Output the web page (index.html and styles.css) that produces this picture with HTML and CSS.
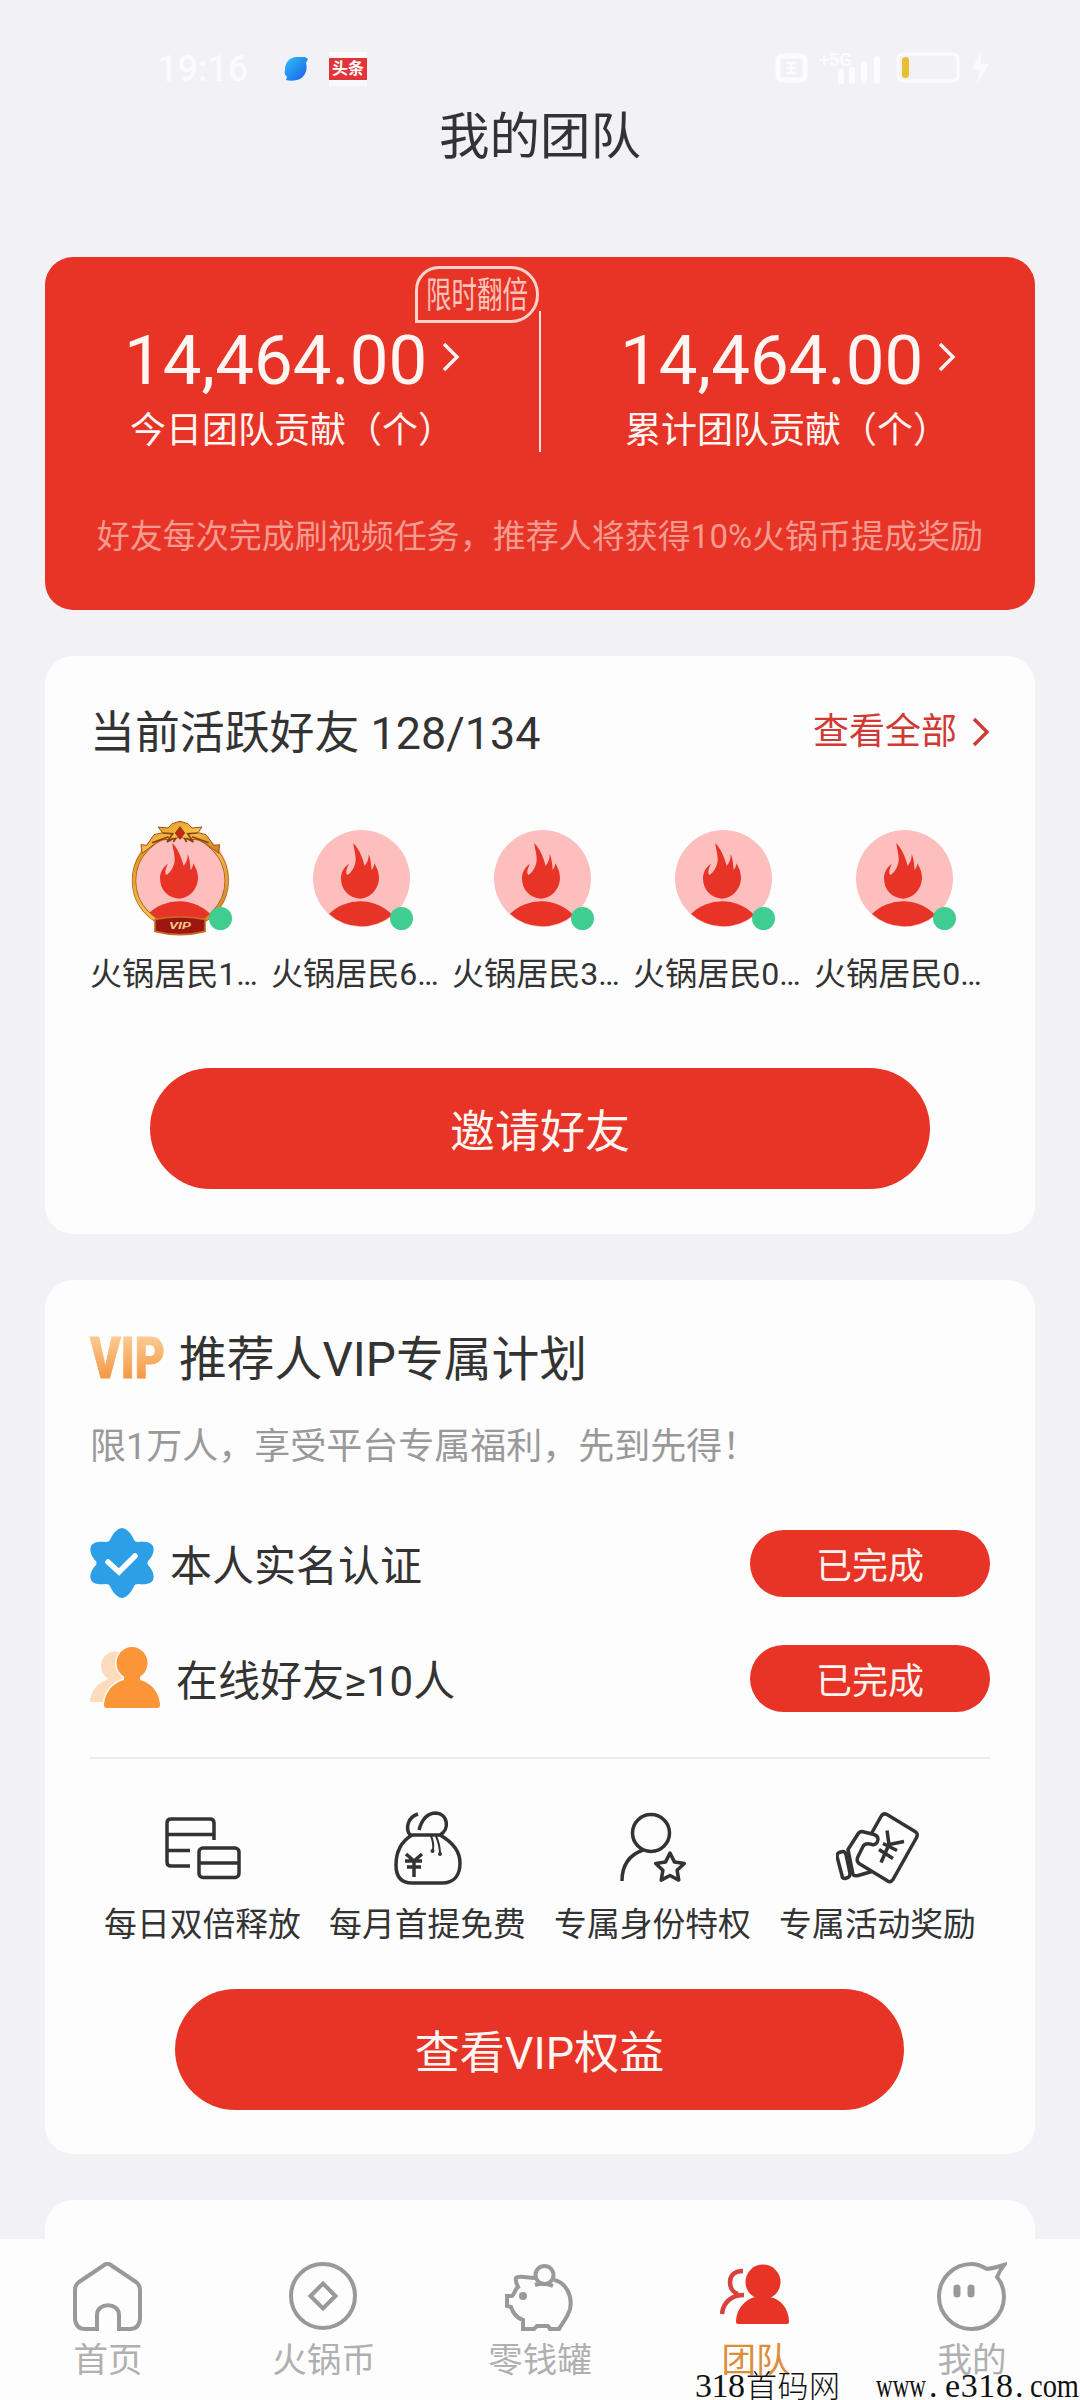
FILE: index.html
```html
<!DOCTYPE html>
<html lang="zh-CN">
<head>
<meta charset="utf-8">
<title>我的团队</title>
<link rel="stylesheet" href="styles.css">
</head>
<body>
<svg class="defs" width="0" height="0" aria-hidden="true">
  <defs>
    <symbol id="avatar" viewBox="0 0 291 291">
      <circle cx="145.5" cy="145.5" r="145.5" fill="#fdbfbe"/>
      <path fill="#e73427" d="M121 40C135 52 148 80 155 108C163 98 168 86 167 72C173 84 174 100 176 120C181 114 183 108 184 100C192 115 198 125 198 145C196 185 165 206 141 206C108 204 84 180 84 145C84 128 92 112 108 101C101 115 97 128 103 135C115 130 130 105 128 85C127 65 122 55 121 40Z"/>
      <path fill="#e73427" d="M48 252A130 125 0 0 1 238 255A145.500 145.500 0 0 1 48 252Z"/>
    </symbol>
    <symbol id="chevron" viewBox="0 0 18 30">
      <path d="M2 2L15 15L2 28" fill="none" stroke="currentColor" stroke-width="3.400"/>
    </symbol>
    <linearGradient id="gold" x1="0" y1="0" x2="0" y2="1">
      <stop offset="0" stop-color="#fbd9a8"/><stop offset="1" stop-color="#f5862b"/>
    </linearGradient>
    <linearGradient id="frame" x1="0" y1="0" x2="1" y2="1">
      <stop offset="0" stop-color="#d98a1c"/><stop offset=".5" stop-color="#f9c04a"/><stop offset="1" stop-color="#c97a1c"/>
    </linearGradient>
    <linearGradient id="sky" x1="0" y1="0" x2="1" y2="1">
      <stop offset="0" stop-color="#2fc0f5"/><stop offset="1" stop-color="#1a5be8"/>
    </linearGradient>
  </defs>
</svg>

<div class="screen">
  <header class="statusbar">
    <div class="status-left">
      <span class="clock">19:16</span>
      <svg class="leaf" width="24" height="24" viewBox="0 0 24 24"><path fill="url(#sky)" d="M1 13C1 5 6 0 13 0H21L24 2L22 6C24 13 21 19 16 22C11 24 7 24 2 23L3 20C1 18 0 16 1 13Z"/></svg>
      <span class="toutiao"><b>头条</b></span>
    </div>
    <div class="status-right">
      <svg width="218" height="40" viewBox="0 0 218 40" fill="none" stroke="#fcfcfe">
        <rect x="3" y="8" width="27" height="24" rx="4" stroke-width="5"/>
        <path d="M12 15H21M12 20H21M12 25H21M16 15V25" stroke-width="2"/>
        <text x="44" y="18" class="net">+5G</text>
        <path d="M66 24V33M77 22V33M89 17V33M102 11V33" stroke-width="6" stroke-linecap="round"/>
        <rect x="123" y="6" width="60" height="27" rx="5" stroke-width="3"/>
        <rect x="127" y="9" width="7" height="21" rx="3.500" fill="#e9bd34" stroke="none"/>
        <path d="M206 3L197 21H205L202 36L214 16H206Z" fill="#fafafd" stroke="none"/>
      </svg>
    </div>
  </header>
  <h1 class="title">我的团队</h1>

  <main class="content">
    <section class="card summary">
      <div class="stats">
        <div class="stat">
          <div class="stat-value">14,464.00<svg width="18" height="30"><use href="#chevron"/></svg></div>
          <div class="stat-label">今日团队贡献（个）</div>
          <span class="flag"><span>限时翻倍</span></span>
        </div>
        <div class="stat total">
          <div class="stat-value">14,464.00<svg width="18" height="30"><use href="#chevron"/></svg></div>
          <div class="stat-label">累计团队贡献（个）</div>
        </div>
      </div>
      <p class="hint">好友每次完成刷视频任务，推荐人将获得10%火锅币提成奖励</p>
    </section>

    <section class="card friends">
      <div class="card-head">
        <h2>当前活跃好友 128/134</h2>
        <a class="more"><span>查看全部</span><svg width="18" height="30"><use href="#chevron"/></svg></a>
      </div>
      <ul class="friend-list">
        <li><div class="avatar"><svg width="97" height="97"><use href="#avatar"/></svg>
          <svg class="vip-frame" width="105" height="117" viewBox="-12 -30 315 351">
            <ellipse cx="145" cy="152" rx="139" ry="138" fill="none" stroke="#a45f13" stroke-width="13"/>
            <ellipse cx="145" cy="152" rx="139" ry="138" fill="none" stroke="url(#frame)" stroke-width="9"/>
            <path d="M30 70L27 44L44 46L66 14L92 8L78 -9L108 -6L120 -19L144 -26L168 -19L180 -6L210 -9L198 8L222 14L245 46L263 44L260 70L240 55L205 30L172 28L144 22L116 28L84 30L50 55Z" fill="url(#frame)" stroke="#9c5513" stroke-width="3"/>
            <path d="M92 9L122 11L105 36L126 25M197 9L167 11L184 36L163 25M60 38L110 20M230 38L180 20M132 24L124 36M157 24L164 36" fill="none" stroke="#8a3f10" stroke-width="5"/>
            <path d="M144 -10L158 9L144 28L130 9Z" fill="#c92416" stroke="#8a3f10" stroke-width="3"/>
            <path d="M69 268Q144 254 219 268V304Q144 324 69 304Z" fill="#9c170f" stroke="#c76b26" stroke-width="5"/>
            <text x="144" y="297" class="frame-text" textLength="66" lengthAdjust="spacingAndGlyphs">VIP</text>
          </svg><i></i></div><span>火锅居民1…</span></li>
        <li><div class="avatar"><svg width="97" height="97"><use href="#avatar"/></svg><i></i></div><span>火锅居民6…</span></li>
        <li><div class="avatar"><svg width="97" height="97"><use href="#avatar"/></svg><i></i></div><span>火锅居民3…</span></li>
        <li><div class="avatar"><svg width="97" height="97"><use href="#avatar"/></svg><i></i></div><span>火锅居民0…</span></li>
        <li><div class="avatar"><svg width="97" height="97"><use href="#avatar"/></svg><i></i></div><span>火锅居民0…</span></li>
      </ul>
      <button class="btn invite">邀请好友</button>
    </section>

    <section class="card vip">
      <div class="vip-head">
        <svg class="logo" width="78" height="50" viewBox="-1 -4 78 50"><text x="0" y="41" class="vip-logo" textLength="75" lengthAdjust="spacingAndGlyphs">VIP</text></svg>
        <h2>推荐人VIP专属计划</h2>
      </div>
      <p class="vip-sub">限1万人，享受平台专属福利，先到先得！</p>
      <div class="task">
        <svg width="64" height="70" viewBox="0 0 64 70"><path fill="#2d9fe6" d="M32 0C38 1 42 7 44 12Q45 14 48 14C55 13 61 14 63 18C65 23 62 29 58 33Q57 35 58 37C62 41 65 47 63 52C61 56 55 57 48 56Q45 56 44 58C42 63 38 69 32 70C26 69 22 63 20 58Q19 56 16 56C9 57 3 56 1 52C-1 47 2 41 6 37Q7 35 6 33C2 29 -1 23 1 18C3 14 9 13 16 14Q19 14 20 12C22 7 26 1 32 0Z"/><path d="M18 34L29 44L45 28" fill="none" stroke="#fff" stroke-width="5.500" stroke-linecap="round"/></svg>
        <span class="task-name">本人实名认证</span>
        <button class="done">已完成</button>
      </div>
      <div class="task second">
        <svg width="70" height="62" viewBox="0 0 70 62"><g fill="#fddcbd"><ellipse cx="25" cy="19" rx="14" ry="14.500"/><path d="M0 55C1 42 9 36 16 33L20 30H32V55Z"/></g><g fill="#fb9638" stroke="#fdfdfd" stroke-width="3" paint-order="stroke"><path d="M14 58C15 42 27 32 42 32C57 32 69 42 70 58Q70 61 67 61H17Q14 61 14 58Z"/><ellipse cx="42" cy="16" rx="15.500" ry="16"/></g><path d="M34 27H50V36H34Z" fill="#fb9638"/></svg>
        <span class="task-name">在线好友≥10人</span>
        <button class="done">已完成</button>
      </div>
      <ul class="benefits">
        <li><svg width="76" height="62" viewBox="0 0 76 62"><path d="M49 23V6Q49 2 45 2H6Q2 2 2 6V45Q2 49 6 49H25M2 17.500H49M2 33.500H25"/><rect x="34" y="31" width="40" height="29.500" rx="4"/><path d="M34 46H74"/></svg><span>每日双倍释放</span></li>
        <li><svg width="68" height="74" viewBox="0 0 68 74"><path d="M18 24C8 30 2 40 2 54C2 66 7 72 18 72H48C60 72 66 64 66 52C66 42 60 32 46 24ZM24 3C14 6 11 17 16 24M25 19C28 8 34 2 42 2C54 3 56 18 46 24"/><path d="M12 43L20 50L28 43M20 50V66M11 50H28M13 56H27"/><path d="M37 25Q40 32 39 39M42 25Q46 34 46 43" stroke-width="2"/><g fill="#333" stroke="none"><circle cx="38.500" cy="40" r="2"/><circle cx="46" cy="43" r="2"/></g></svg><span>每月首提免费</span></li>
        <li><svg width="68" height="72" viewBox="0 0 68 72"><circle cx="32" cy="21" r="18.500"/><path d="M3 69C3 54 10 43 24 38"/><path d="M51 41L55.400 49.900L65.300 51.400L58.100 58.300L59.800 68.100L51 63.500L42.200 68.100L43.900 58.300L36.700 51.400L46.600 49.900Z"/></svg><span>专属身份特权</span></li>
        <li><svg width="84" height="73" viewBox="0 0 84 73"><path d="M36 21L45 5Q47 1 51 3L79 20Q83 22 80 27L57 68Q54 72 51 69L23 52Q20 49 22 45L27 35Q29 31 36 33Q41 34 42 28Q42 24 38 23L26 20Q23 20 21 24L12 38L17 63Q18 65 22 64L36 60"/><path d="M3 41L7 40Q9 40 10 43L14 62Q14 65 12 66L9 67Q6 67 6 64L1 45Q1 42 3 41Z"/><path d="M51 19L53 33L68 30M53 33L45 51M47 32L61 39M43 38L57 47"/></svg><span>专属活动奖励</span></li>
      </ul>
      <button class="btn rights">查看VIP权益</button>
    </section>

    <section class="card next"></section>
  </main>

  <nav class="tabbar">
    <a><svg width="69" height="69" viewBox="0 0 69 69"><path d="M37 2.500L63 20Q67 23 67 28V57Q66 67 57 67H46V53C46 40 24 40 24 53V67H12Q3 67 2 57V28Q2 23 6 20L32 2.500Q34.500 1 37 2.500Z"/></svg><span>首页</span></a>
    <a><svg width="68" height="69" viewBox="0 0 68 69"><circle cx="34" cy="34" r="32"/><path d="M34 21.500L46.500 34L34 46.500L21.500 34Z"/></svg><span>火锅币</span></a>
    <a><svg width="69" height="69" viewBox="0 -3 69 69"><circle cx="39.500" cy="10" r="9"/><path d="M30 13C22 13 14 10 11 13C10 16 12 20 13 22C10 24 9 30 7 31H2V41L6 42C8 48 12 53 18 55V64H29L32 61H43L45 64H54C57 58 62 54 65 44C68 30 60 17 49 15M30 20Q39 17 48 21"/><circle cx="18" cy="31" r="4" fill="#999" stroke="none"/></svg><span>零钱罐</span></a>
    <a class="active"><svg width="70" height="69" viewBox="0 -3 70 69"><g fill="#e73427" stroke="none"><circle cx="43" cy="17" r="17.500"/><path d="M16 57C16 43 27 33 36 32H50C60 34 69 43 69 57Q69 59 67 59H18Q16 59 16 57Z"/></g><path d="M23 6C13 6 10 12 10 17C10 24 14 28 18 29M24 30C12 30 3 37 2 49" stroke="#d8423c" stroke-width="4.500"/></svg><span>团队</span></a>
    <a><svg width="70" height="69" viewBox="0 0 70 69"><path d="M50 7Q58 6 67 3Q63 8 60 15C65 21 67 28 67 35A32.500 32.500 0 1 1 34.500 2C40 2 45 4 50 7Z"/><path d="M20 26V32M34 26V32" stroke-width="7" stroke-linecap="round"/></svg><span>我的</span></a>
  </nav>

  <svg class="watermark" width="390" height="34" viewBox="690 2366 390 34">
    <text x="695" y="2397" textLength="50">318</text>
    <text x="746" y="2397" class="cn" textLength="94">首码网</text>
    <text x="876" y="2397" textLength="50" lengthAdjust="spacingAndGlyphs">www</text>
    <text x="929" y="2397">.</text>
    <text x="945" y="2397" textLength="68">e318</text>
    <text x="1015" y="2397">.</text>
    <text x="1030" y="2397" textLength="49" lengthAdjust="spacingAndGlyphs">com</text>
  </svg>
</div>
</body>
</html>
```

FILE: styles.css
```css
* { box-sizing: border-box; margin: 0; padding: 0; }
body {
  width: 1080px;
  height: 2400px;
  overflow: hidden;
  background: #f2f1f6;
  color: #333;
  font-family: Roboto, "Noto Sans CJK SC", sans-serif;
}
h1, h2 { font-weight: 400; }
ul { list-style: none; }
button { border: 0; font: inherit; color: inherit; }
svg { display: block; flex: none; }
.defs { position: absolute; }
.screen {
  position: relative;
  height: 2400px;
  display: flex;
  flex-direction: column;
  overflow: hidden;
}

/* status bar */
.statusbar {
  height: 100px;
  padding: 48px 87px 0 157px;
  display: flex;
  justify-content: space-between;
}
.status-left { display: flex; height: 42px; align-items: center; }
.clock { width: 127px; font-size: 36px; font-weight: 500; line-height: 42px; color: #fbfbfe; }
.toutiao {
  margin-left: 21px;
  height: 34px;
  width: 38px;
  padding: 6px 0;
  background: #fafafc;
}
.toutiao b {
  display: block;
  height: 22px;
  background: #e2343a;
  color: #fff;
  font-size: 16px;
  line-height: 22px;
  text-align: center;
}
.net { font-size: 18px; font-weight: 500; fill: #fcfcfe; stroke: none; }
.status-right { width: 218px; }
.title {
  height: 157px;
  font-size: 50.5px;
  line-height: 74px;
  text-align: center;
}

/* cards */
.content {
  padding: 0 45px;
  display: flex;
  flex-direction: column;
  gap: 46px;
}
.card { border-radius: 28px; background: #fdfdfd; padding: 0 45px; }
.btn {
  display: block;
  border-radius: 61px;
  background: #e73427;
  color: #fff5f3;
  font-size: 45px;
  text-align: center;
}

.summary { height: 353px; background: #e73427; color: #fff6f3; padding: 54px 0 0; }
.stats { height: 141px; display: grid; grid-template: 141px / 1fr 1fr; }
.stat { position: relative; padding-left: 79px; }
.total { padding-left: 79px; border-left: 2px solid #fbe1dc; margin-left: -1px; }
.stat-value { display: flex; align-items: center; font-size: 69px; line-height: 92px; height: 96px; padding-top: 4px; }
.stat-value svg { margin: 0 0 8px 15px; }
.stat-label { height: 45px; padding-left: 6px; font-size: 36px; line-height: 49px; }
.total .stat-label { padding-left: 5px; }
.flag {
  position: absolute;
  left: 370px;
  top: -45px;
  width: 124px;
  height: 57px;
  border: 3px solid #fcd3cc;
  border-radius: 24px 28px 28px 0;
  display: flex;
  justify-content: center;
  align-items: center;
  color: #fbc3ba;
}
.flag span { flex: none; font-size: 36px; line-height: 50px; padding-top: 2px; transform: scaleX(.71); white-space: nowrap; }
.hint {
  margin-top: 61px;
  text-align: center;
  font-size: 33px;
  line-height: 48px;
  color: #f59b90;
}

.friends { height: 578px; padding-top: 47px; }
.card-head { display: flex; justify-content: space-between; align-items: center; height: 62px; }
.card-head h2 { font-size: 44.9px; line-height: 62px; }
.more { display: flex; align-items: center; gap: 15px; font-size: 36px; color: #d03a33; }
.more span { line-height: 50px; padding-bottom: 4px; }
.more svg { margin-bottom: 5px; }
.friend-list { display: grid; grid-template-columns: repeat(5, 181px); margin-top: 65px; }
.friend-list li { display: flex; flex-direction: column; align-items: center; }
.avatar { position: relative; width: 97px; height: 97px; }
.avatar i {
  position: absolute;
  right: -3px;
  bottom: -3px;
  width: 23px;
  height: 23px;
  border-radius: 50%;
  background: #3fcd91;
}
.vip-frame { position: absolute; left: -4px; top: -10px; }
.frame-text { font: italic 700 28px Roboto, sans-serif; fill: #f3c58c; text-anchor: middle; }
.friend-list span { width: 181px; margin-top: 25px; font-size: 32.1px; line-height: 44px; white-space: nowrap; }
.invite { width: 780px; height: 121px; margin: 72px auto 0; }

.vip { height: 874px; padding-top: 47px; }
.vip-head { display: flex; align-items: center; gap: 13px; height: 66px; }
.logo { margin: 0 -1px 4px -1px; }
.vip-logo { font: 900 57px Roboto, sans-serif; fill: url(#gold); stroke: url(#gold); stroke-width: 1; }
.vip-head h2 { font-size: 47.8px; line-height: 66px; }
.vip-sub { margin-top: 29px; font-size: 36px; line-height: 50px; color: #999; }
.task { display: flex; align-items: center; height: 70px; margin-top: 56px; }
.second { margin-top: 45px; }
.task-name { flex: 1; padding: 8px 0 0 16px; font-size: 42px; line-height: 60px; }
.done {
  width: 240px;
  height: 67px;
  border-radius: 34px;
  background: #e73427;
  color: #fff3f0;
  font-size: 36px;
}
.benefits {
  margin-top: 44px;
  padding-top: 52px;
  border-top: 2px solid #ebebed;
  display: grid;
  grid-template-columns: repeat(4, 225px);
}
.benefits li { display: flex; flex-direction: column; align-items: center; }
.benefits svg {
  height: 74px;
  fill: none;
  stroke: #333;
  stroke-width: 3.5;
  stroke-linejoin: round;
}
.benefits span { margin-top: 17px; font-size: 32.8px; line-height: 46px; }
.rights { width: 729px; height: 121px; margin: 41px 0 0 85px; }
.next { height: 80px; }

/* bottom navigation */
.tabbar {
  position: absolute;
  left: 0;
  bottom: 0;
  width: 1080px;
  height: 161px;
  padding-top: 23px;
  background: #fdfdfd;
  display: grid;
  grid-template-columns: repeat(5, 216px);
}
.tabbar a { display: flex; flex-direction: column; align-items: center; }
.tabbar svg { fill: none; stroke: #999; stroke-width: 4; margin-right: 2px; }
.tabbar a:last-child svg { margin-right: 0; }
.tabbar span { margin-top: 6px; font-size: 34.5px; line-height: 46px; color: #b0b0b0; }
.tabbar .active span { color: #dc8d3a; }

.watermark {
  position: absolute;
  right: 0;
  bottom: 0;
  font-family: "Liberation Serif", serif;
  font-size: 34px;
  fill: #111;
}
.watermark .cn { font-family: "Noto Sans CJK SC", sans-serif; font-weight: 300; font-size: 31px; }
```
